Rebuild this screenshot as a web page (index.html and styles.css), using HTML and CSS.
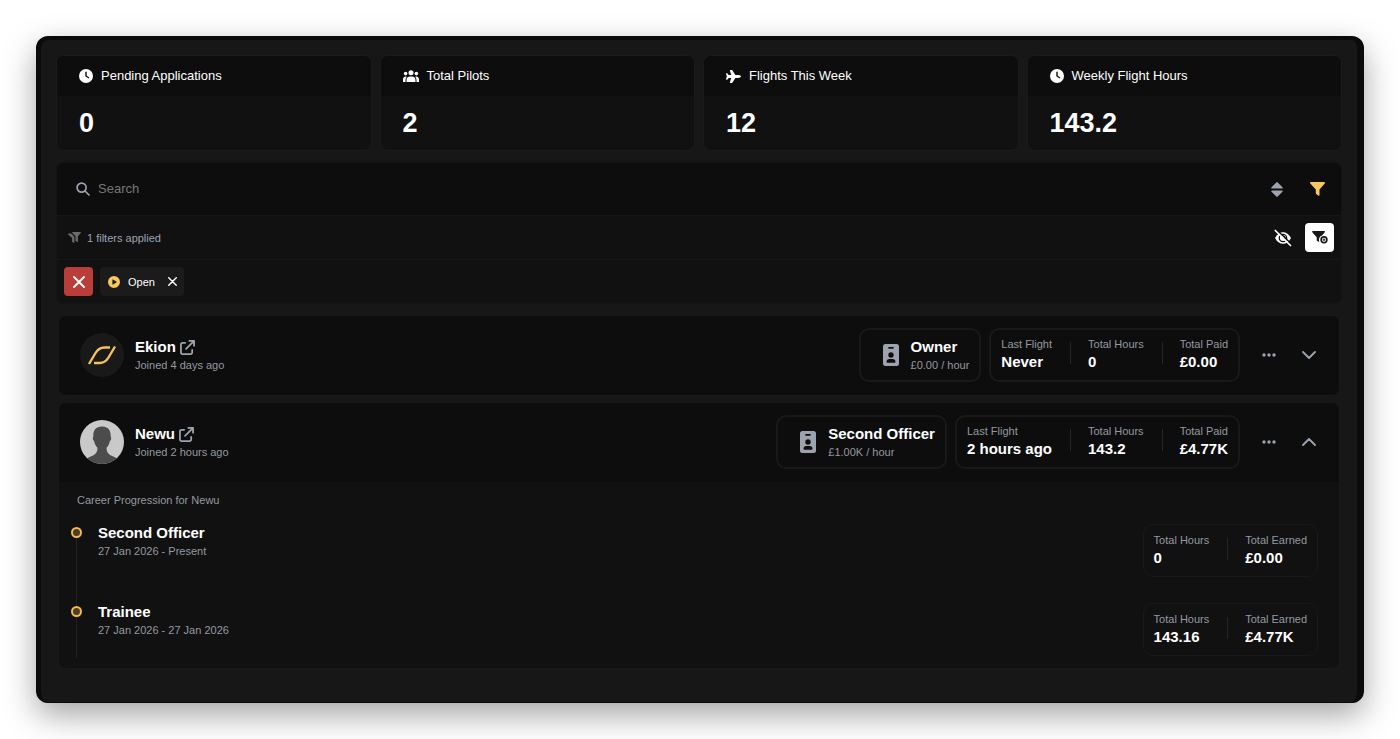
FILE: index.html
```
<!DOCTYPE html>
<html lang="en">
<head>
    <meta charset="UTF-8">
    <meta name="viewport" content="width=device-width, initial-scale=1.0">
    <title>Pilots</title>
    <link rel="stylesheet" href="styles.css">
</head>
<body>
    <!-- shared icons -->
    <svg class="sprite" aria-hidden="true">
        <symbol id="clock" viewBox="0 0 16 16">
            <path fill="currentColor" fill-rule="evenodd" d="M8 0a8 8 0 1 0 0 16A8 8 0 0 0 8 0zM7.2 3.2h1.6v4.4l3 2-.9 1.3-3.7-2.5z"/>
        </symbol>
        <symbol id="external" viewBox="0 0 16 16">
            <path fill="none" stroke="currentColor" stroke-width="1.9" stroke-linecap="round" stroke-linejoin="round" d="M5.500 3H2.800A1.800 1.800 0 0 0 1 4.800v8.400A1.800 1.800 0 0 0 2.800 15h8.400a1.800 1.800 0 0 0 1.800-1.800v-2.700M10 1h5v5M15 1L6.500 9.500"/>
        </symbol>
        <symbol id="badge" viewBox="0 0 16 22">
            <path fill="currentColor" fill-rule="evenodd" d="M2.5 0h11A2.5 2.5 0 0 1 16 2.500v17a2.500 2.500 0 0 1-2.500 2.500h-11A2.500 2.500 0 0 1 0 19.500v-17A2.500 2.500 0 0 1 2.500 0zM6 3a.8.8 0 0 0 0 1.700h4A.8.8 0 0 0 10 3zM8 8.300a2.700 2.700 0 1 0 0 5.400 2.700 2.700 0 0 0 0-5.400zM6.500 15A3 3 0 0 0 3.500 18q0 .8.8.8h7.400q.8 0 .8-.8a3 3 0 0 0-3-3z"/>
        </symbol>
        <symbol id="dots" viewBox="0 0 14 4">
            <circle cx="2" cy="2" r="1.700" fill="currentColor"/><circle cx="7" cy="2" r="1.700" fill="currentColor"/><circle cx="12" cy="2" r="1.700" fill="currentColor"/>
        </symbol>
        <symbol id="cross" viewBox="0 0 12 12">
            <path fill="none" stroke="currentColor" stroke-width="1.900" stroke-linecap="round" d="M1 1l10 10M11 1L1 11"/>
        </symbol>
    </svg>

    <main class="window">
        <section class="stats">
            <div class="stat">
                <h2 class="stat-title"><svg width="14" height="14"><use href="#clock"/></svg>Pending Applications</h2>
                <p class="stat-value">0</p>
            </div>
            <div class="stat">
                <h2 class="stat-title">
                    <svg width="16" height="13" viewBox="0 0 16 13" fill="currentColor"><circle cx="8" cy="2.800" r="2.500"/><circle cx="2.600" cy="3.600" r="1.800"/><circle cx="13.400" cy="3.600" r="1.800"/><path d="M3.500 12V10a3.600 3.600 0 0 1 3.600-3.600h1.800A3.600 3.600 0 0 1 12.500 10v2zM0 11.900V9.200a2.700 2.700 0 0 1 3.800-2.500A4.800 4.800 0 0 0 2.500 10v1.900zM16 11.900V9.200a2.700 2.700 0 0 0-3.800-2.500A4.800 4.800 0 0 1 13.500 10v1.900z"/></svg>Total Pilots</h2>
                <p class="stat-value">2</p>
            </div>
            <div class="stat">
                <h2 class="stat-title">
                    <svg width="15" height="13" viewBox="0 0 15 13" fill="currentColor"><path d="M12.300 5.100H9.400L6.300.3A.6.6 0 0 0 5.800 0H4.300q-.5 0-.4.500l1.300 4.600H2.700L1.400 3.500 1.100 3.300H.3q-.4 0-.3.400L.8 6.500 0 9.300q-.1.400.3.400h.8l.3-.2 1.300-1.600h2.500L3.900 12.500q-.1.500.4.500h1.500l.5-.3L9.400 7.900h2.900c1 0 2.700-.600 2.700-1.400s-1.700-1.400-2.700-1.400z"/></svg>Flights This Week</h2>
                <p class="stat-value">12</p>
            </div>
            <div class="stat">
                <h2 class="stat-title"><svg width="14" height="14"><use href="#clock"/></svg>Weekly Flight Hours</h2>
                <p class="stat-value">143.2</p>
            </div>
        </section>

        <section class="filters">
            <div class="search-row">
                <label for="search" aria-label="Search">
                    <svg width="14" height="14" viewBox="0 0 14 14" fill="none" stroke="currentColor" stroke-width="1.700" stroke-linecap="round"><circle cx="5.600" cy="5.600" r="4.500"/><path d="M9 9l4 4"/></svg>
                </label>
                <input type="text" id="search" placeholder="Search">
                <button class="icon-btn" type="button" aria-label="Sort">
                    <svg width="12" height="15" viewBox="0 0 12 15" fill="currentColor"><path d="M5.300.4a1 1 0 0 1 1.400 0l4.800 4.900q.8 1.200-.6 1.300H1.100Q-.3 6.500.5 5.300zM5.300 14.600a1 1 0 0 0 1.400 0l4.800-4.900q.8-1.200-.6-1.300H1.100Q-.3 8.500.5 9.700z"/></svg>
                </button>
                <button class="icon-btn yellow" type="button" aria-label="Filters">
                    <svg width="15" height="14" viewBox="0 0 15 14" fill="currentColor"><path d="M1 0h13q1.500.2.700 1.600L9.500 7.500v5.400q-.2 1.300-1.300.7l-2-1.500-.4-.8V7.500L.3 1.600Q-.500.2 1 0z"/></svg>
                </button>
            </div>
            <div class="applied-row">
                <svg width="13" height="11" viewBox="0 0 13 11" fill="currentColor"><path d="M4.800 0h7.600q.8.200.3 1L9.900 4.300v5.100q-.1.800-.7.500L7.500 8.700V4.300L4.300.900Q4 .2 4.800 0zM.6 1.600h2.700L6.400 5v5.300q-.1.900-.8.500l-1.500-1V6L.2 2.500Q-.2 1.800.6 1.600z"/></svg>
                <span class="applied-text">1 filters applied</span>
                <button class="icon-btn white" type="button" aria-label="Hide filters">
                    <svg width="18" height="18" viewBox="0 0 18 18"><path d="M1 9q3.200-5.800 8-5.800T17 9q-3.200 5.800-8 5.800T1 9z" fill="currentColor"/><circle cx="9" cy="9" r="3.700" fill="none" stroke="#111" stroke-width="1.300"/><path d="M9 7a2 2 0 0 1 1.500 3.300" fill="none" stroke="#111" stroke-width="1.200"/><path d="M2.800 1L18 15.500" stroke="#111" stroke-width="1.500"/><path d="M1.300 1.500l15.200 15" stroke="currentColor" stroke-width="1.700" stroke-linecap="round"/></svg>
                </button>
                <button class="square-btn add-filter" type="button" aria-label="Add filter">
                    <svg width="16" height="13" viewBox="0 0 16 13"><path d="M.8 0h11.400q1.300.2.500 1.300L10 4.600a4.400 4.400 0 0 0-2.800 5.700q.1.800-.6.500L4.700 9.500V6.300L.3 1.300Q-.300.2.8 0z" fill="currentColor"/><circle cx="12" cy="8.800" r="2.900" fill="none" stroke="currentColor" stroke-width="1.600"/><path d="M12 7.500v2.600M10.700 8.800h2.600" stroke="currentColor"/></svg>
                </button>
            </div>
            <div class="chips-row">
                <button class="square-btn clear" type="button" aria-label="Clear filters"><svg width="12" height="12"><use href="#cross"/></svg></button>
                <button class="chip" type="button" aria-label="Remove filter Open">
                    <svg class="yellow" width="12" height="12" viewBox="0 0 12 12"><path fill="currentColor" fill-rule="evenodd" d="M6 0a6 6 0 1 0 0 12A6 6 0 0 0 6 0zM4.400 3.700q0-.6.500-.3l3.500 2.200q.5.400 0 .8L4.900 8.600q-.5.300-.5-.3z"/></svg>
                    <span>Open</span>
                    <svg width="9" height="9"><use href="#cross"/></svg>
                </button>
            </div>
        </section>

        <section class="pilots">
            <article class="pilot">
                <div class="pilot-head">
                    <svg class="avatar" viewBox="0 0 44 44"><circle cx="22" cy="22" r="22" fill="#191919"/><g fill="none" stroke="#f4c258" stroke-width="2.400"><path d="M9 31l6.500-11q3.300-5.500 9-5.500H30"/><path d="M35 13.500l-6.500 11q-3.300 5.500-9 5.500H14"/></g></svg>
                    <div class="text">
                        <a class="name" href="#">Ekion <svg width="15" height="15"><use href="#external"/></svg></a>
                        <span class="muted">Joined 4 days ago</span>
                    </div>
                    <div class="box rank">
                        <svg width="16" height="22"><use href="#badge"/></svg>
                        <div class="text"><strong>Owner</strong><span class="muted">£0.00 / hour</span></div>
                    </div>
                    <dl class="box figures">
                        <div class="figure"><dt>Last Flight</dt><dd>Never</dd></div>
                        <div class="figure"><dt>Total Hours</dt><dd>0</dd></div>
                        <div class="figure"><dt>Total Paid</dt><dd>£0.00</dd></div>
                    </dl>
                    <div class="actions">
                        <button class="icon-btn" type="button" aria-label="More"><svg width="14" height="4"><use href="#dots"/></svg></button>
                        <button class="icon-btn" type="button" aria-label="Expand"><svg width="14" height="8" viewBox="0 0 14 8" fill="none" stroke="currentColor" stroke-width="1.800" stroke-linecap="round" stroke-linejoin="round"><path d="M1 1l6 6 6-6"/></svg></button>
                    </div>
                </div>
            </article>

            <article class="pilot">
                <div class="pilot-head">
                    <svg class="avatar" viewBox="0 0 44 44">
                        <clipPath id="round"><circle cx="22" cy="22" r="22"/></clipPath>
                        <g clip-path="url(#round)"><rect width="44" height="44" fill="#c9c9c9"/><path fill="#4c4c4c" d="M22 6.500c-6.500 0-9 4-8.700 10.500-.9.300-.6 3.400.8 4 .4 3 1.700 5 3.400 6.800 0 4-1.500 6.200-4.500 7.700C10 37 7 38 5 40v5h34v-5c-2-2-5-3-8-4.500-3-1.500-4.500-3.700-4.500-7.700 1.700-1.800 3-3.800 3.400-6.800 1.400-.6 1.700-3.700.8-4C31 10.500 28.500 6.500 22 6.500z"/></g>
                    </svg>
                    <div class="text">
                        <a class="name" href="#">Newu <svg width="15" height="15"><use href="#external"/></svg></a>
                        <span class="muted">Joined 2 hours ago</span>
                    </div>
                    <div class="box rank">
                        <svg width="16" height="22"><use href="#badge"/></svg>
                        <div class="text"><strong>Second Officer</strong><span class="muted">£1.00K / hour</span></div>
                    </div>
                    <dl class="box figures">
                        <div class="figure"><dt>Last Flight</dt><dd>2 hours ago</dd></div>
                        <div class="figure"><dt>Total Hours</dt><dd>143.2</dd></div>
                        <div class="figure"><dt>Total Paid</dt><dd>£4.77K</dd></div>
                    </dl>
                    <div class="actions">
                        <button class="icon-btn" type="button" aria-label="More"><svg width="14" height="4"><use href="#dots"/></svg></button>
                        <button class="icon-btn" type="button" aria-label="Collapse"><svg width="14" height="8" viewBox="0 0 14 8" fill="none" stroke="currentColor" stroke-width="1.800" stroke-linecap="round" stroke-linejoin="round"><path d="M1 7l6-6 6 6"/></svg></button>
                    </div>
                </div>
                <div class="career">
                    <h3 class="career-title">Career Progression for Newu</h3>
                    <ol class="timeline">
                        <li class="step">
                            <div class="marker"></div>
                            <div class="text"><strong>Second Officer</strong><span class="muted">27 Jan 2026 - Present</span></div>
                            <dl class="box figures thin">
                                <div class="figure"><dt>Total Hours</dt><dd>0</dd></div>
                                <div class="figure"><dt>Total Earned</dt><dd>£0.00</dd></div>
                            </dl>
                        </li>
                        <li class="step">
                            <div class="marker"></div>
                            <div class="text"><strong>Trainee</strong><span class="muted">27 Jan 2026 - 27 Jan 2026</span></div>
                            <dl class="box figures thin">
                                <div class="figure"><dt>Total Hours</dt><dd>143.16</dd></div>
                                <div class="figure"><dt>Total Earned</dt><dd>£4.77K</dd></div>
                            </dl>
                        </li>
                    </ol>
                </div>
            </article>
        </section>
    </main>
</body>
</html>
```
FILE: styles.css
```
* {
    box-sizing: border-box;
}
body {
    margin: 0;
    padding: 36px;
    background: #fff;
    color: #fff;
    font-family: "Liberation Sans", Arial, sans-serif;
    font-size: 11px;
    line-height: 18px;
}
h2, h3, p, dl, dd, ol {
    margin: 0;
    padding: 0;
}
svg {
    display: block;
    flex: none;
}
button {
    display: flex;
    align-items: center;
    justify-content: center;
    padding: 0;
    border: 0;
    background: none;
    color: inherit;
    font: inherit;
    cursor: pointer;
}
.sprite {
    position: absolute;
    width: 0;
    height: 0;
}
.window {
    padding: 15px 15px 33px;
    background: #171717;
    border: solid #0b0b0b;
    border-width: 4px 7px 1px 5px;
    border-radius: 12px;
    box-shadow: 0 12px 32px rgba(0, 0, 0, 0.36);
}

/* stat cards */
.stats {
    display: grid;
    grid-template-columns: repeat(4, 1fr);
    gap: 8px;
    margin-bottom: 11px;
}
.stat {
    overflow: hidden;
    background: #111;
    border: 1px solid #1b1b1b;
    border-radius: 8px;
}
.stat-title {
    display: flex;
    align-items: center;
    gap: 8px;
    height: 40px;
    padding: 0 22px;
    background: #0d0d0d;
    font-size: 13px;
    font-weight: normal;
}
.stat-value {
    padding: 11px 22px;
    font-size: 27px;
    font-weight: bold;
    line-height: 32px;
}

/* search and filters */
.filters {
    overflow: hidden;
    margin-bottom: 11px;
    background: #111;
    border: 1px solid #141414;
    border-radius: 8px;
}
.search-row, .applied-row, .chips-row {
    display: flex;
    align-items: center;
    height: 44px;
}
.search-row {
    gap: 8px;
    height: 53px;
    padding: 0 8px 0 19px;
    background: #0d0d0d;
    color: #9ca3af;
    border-bottom: 1px solid #171717;
}
.search-row input {
    flex: 1;
    min-width: 0;
    padding: 0;
    border: 0;
    outline: 0;
    background: none;
    color: #fff;
    font: inherit;
    font-size: 13px;
}
.search-row input::placeholder {
    color: #777;
}
.icon-btn {
    width: 32px;
    height: 32px;
    color: #9ca3af;
}
.yellow {
    color: #f8c85c;
}
.white {
    color: #fff;
}
.applied-row {
    gap: 6px;
    padding: 0 7px 0 11px;
    color: #6b6b6b;
    border-bottom: 1px solid #171717;
}
.applied-text {
    flex: 1;
    color: #9ca3af;
}
.square-btn {
    width: 29px;
    height: 29px;
    border-radius: 4px;
}
.add-filter {
    background: #fff;
    color: #171717;
}
.chips-row {
    gap: 7px;
    height: 43px;
    padding: 0 7px;
}
.clear {
    background: #b93e3a;
}
.chip {
    gap: 8px;
    height: 29px;
    padding: 0 7px 0 8px;
    background: #1b1b1b;
    border-radius: 4px;
}
.chip span {
    padding-right: 5px;
}

/* pilots */
.pilots {
    display: flex;
    flex-direction: column;
    gap: 6px;
    padding: 0 2px;
}
.pilot {
    overflow: hidden;
    background: #111;
    border: 1px solid #191919;
    border-radius: 8px;
}
.pilot-head {
    display: flex;
    align-items: center;
    gap: 8px;
    padding: 12px 14px 13px 21px;
    background: #0d0d0d;
}
.pilot-head > .text, .step > .text {
    flex: 1;
}
.avatar {
    width: 44px;
    height: 44px;
    margin-right: 3px;
}
.text {
    display: flex;
    flex-direction: column;
    align-items: flex-start;
}
.pilot-head .text {
    padding-top: 2px;
}
.name, strong, dd {
    color: #fff;
    font-size: 15px;
    font-weight: bold;
    white-space: nowrap;
}
.name {
    display: flex;
    align-items: center;
    gap: 4px;
    text-decoration: none;
}
.name svg, .rank svg {
    color: #9ca3af;
}
.muted, dt {
    color: #9499a0;
    white-space: nowrap;
}
.box {
    display: flex;
    align-items: center;
    padding: 5px 10px 9px;
    border: 2px solid #191919;
    border-radius: 10px;
}
.rank {
    gap: 12px;
    padding: 6px 10px 6px 22px;
}
.figure {
    display: flow-root;
}
.figure + .figure {
    display: grid;
    grid-template-columns: 1px auto;
    column-gap: 17px;
    margin-left: 18px;
}
.figure + .figure::before {
    content: "";
    grid-row: 1 / 3;
    align-self: center;
    height: 22px;
    background: #252525;
}
.actions {
    display: flex;
    gap: 8px;
    padding-left: 5px;
}

/* career */
.career {
    padding: 9px 21px 10px 12px;
}
.career-title {
    padding: 0 6px;
    margin-bottom: 15px;
    color: #9499a0;
    font-size: 11px;
    font-weight: normal;
}
.timeline {
    list-style: none;
}
.step {
    display: flex;
    align-items: flex-start;
    gap: 16px;
    padding-bottom: 26px;
    position: relative;
}
.step:last-child {
    padding-bottom: 2px;
}
.marker {
    width: 11px;
    height: 11px;
    margin-top: 3px;
    background: #4b3e22;
    border: 2px solid #f4b94f;
    border-radius: 50%;
}
.step::before {
    content: "";
    position: absolute;
    top: 14px;
    bottom: -3px;
    left: 5px;
    width: 1px;
    background: #222;
}
.step:last-child::before {
    bottom: 0;
}
.thin {
    padding: 6px 10px 9px;
    border-width: 1px;
    border-color: #191919;
}
```
